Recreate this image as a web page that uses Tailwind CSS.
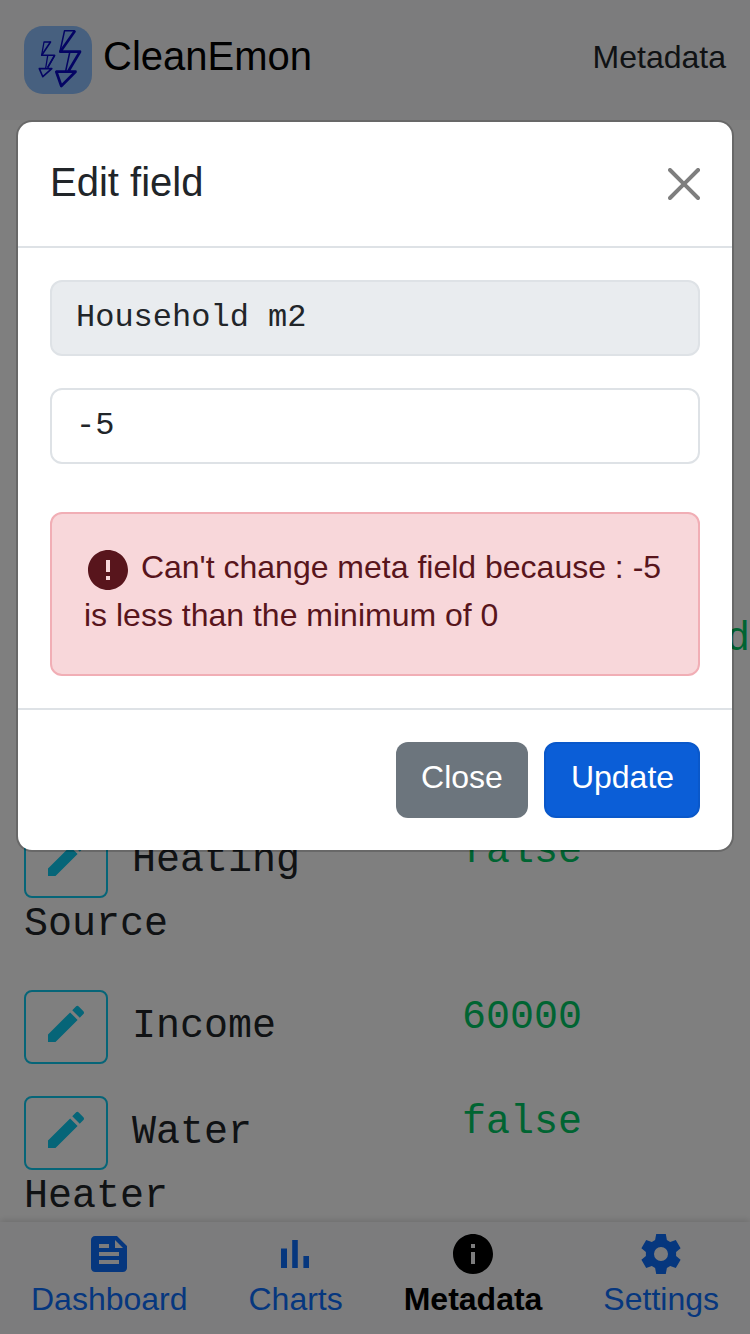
<!DOCTYPE html>
<html lang="en">
<head>
<meta charset="utf-8">
<title>CleanEmon</title>
<script src="https://cdn.jsdelivr.net/npm/@tailwindcss/browser@4"></script>
</head>
<body class="bg-white text-[#212529] font-['Liberation_Sans',sans-serif] h-[1334px] w-[750px] overflow-hidden relative">
<div class="flex h-[1334px] flex-col">
  <header class="flex h-[120px] shrink-0 items-center justify-between bg-[#f8f9fa] px-6">
    <div class="flex items-center gap-[11px]">
      <svg class="size-[68px]" viewBox="0 0 68 68" fill="none" stroke="#0808c8" stroke-linejoin="round" stroke-linecap="round">
        <rect width="68" height="68" rx="19" fill="#8ec0fe" stroke="none"/>
        <path stroke-width="1.300" d="M26 16H20L17.700 29M23.700 29.700L21.700 42M24 41L30.700 29.700"/>
        <path stroke-width="1.600" d="M26.500 16L17.700 29.300H30.500L24 41M15.300 42.600H27.800L18.800 50.700Z"/>
        <path stroke-width="1.500" d="M50 4.800H40.500L36 25.500M45.700 26.500L41.700 45"/>
        <path stroke-width="2.700" d="M50.500 5.500L36.300 25.700H56L44.500 45M32.300 45.700H51.500L37.300 60Z"/>
      </svg>
      <span class="text-[40px] leading-[60px] text-black -mt-[8px]">CleanEmon</span>
    </div>
    <span class="text-[32px] leading-[48px] -mt-[6px]">Metadata</span>
  </header>

  <main class="h-[1102px] shrink-0 overflow-hidden px-6 pt-[490px] font-['Liberation_Mono',monospace] text-[40px] leading-[60px]">
    <div class="h-[212px] pl-[702px] text-[#00c864]">d</div>
    <div class="grid grid-cols-[438px_1fr] pb-8">
      <div class="pt-[2px]">
        <div class="flex h-[72px] items-start gap-6">
          <span class="flex h-[74px] w-[84px] shrink-0 justify-center rounded-lg border-2 border-[#0dcaf0] pt-2 text-[#0dcaf0]"><svg class="size-12" viewBox="0 0 24 24" fill="currentColor"><path d="M3 17.250V21h3.750L17.810 9.940l-3.750-3.750L3 17.250zM20.710 7.040c.39-.39.39-1.020 0-1.410l-2.340-2.340a.9959.9959 0 0 0-1.410 0l-1.830 1.830 3.750 3.750 1.830-1.830z"/></svg></span>
          <span class="pt-[7px]">Heating</span>
        </div>
        <div class="-mt-px mb-px">Source</div>
      </div>
      <div class="text-[#00c864]">false</div>
    </div>
    <div class="grid grid-cols-[438px_1fr] pb-8">
      <div class="pt-[2px]">
        <div class="flex h-[72px] items-start gap-6">
          <span class="flex h-[74px] w-[84px] shrink-0 justify-center rounded-lg border-2 border-[#0dcaf0] pt-2 text-[#0dcaf0]"><svg class="size-12" viewBox="0 0 24 24" fill="currentColor"><path d="M3 17.250V21h3.750L17.810 9.940l-3.750-3.750L3 17.250zM20.710 7.040c.39-.39.39-1.020 0-1.410l-2.340-2.340a.9959.9959 0 0 0-1.410 0l-1.830 1.830 3.750 3.750 1.830-1.830z"/></svg></span>
          <span class="pt-[7px]">Income</span>
        </div>
      </div>
      <div class="text-[#00c864]">60000</div>
    </div>
    <div class="grid grid-cols-[438px_1fr]">
      <div class="pt-[2px]">
        <div class="flex h-[72px] items-start gap-6">
          <span class="flex h-[74px] w-[84px] shrink-0 justify-center rounded-lg border-2 border-[#0dcaf0] pt-2 text-[#0dcaf0]"><svg class="size-12" viewBox="0 0 24 24" fill="currentColor"><path d="M3 17.250V21h3.750L17.810 9.940l-3.750-3.750L3 17.250zM20.710 7.040c.39-.39.39-1.020 0-1.410l-2.340-2.340a.9959.9959 0 0 0-1.410 0l-1.830 1.830 3.750 3.750 1.830-1.830z"/></svg></span>
          <span class="pt-[7px]">Water</span>
        </div>
        <div class="-mt-px">Heater</div>
      </div>
      <div class="-mt-px text-[#00c864]">false</div>
    </div>
  </main>

  <nav class="relative flex h-[112px] shrink-0 justify-between bg-[#f8f9fa] px-[31px] pt-2 text-[32px] leading-[48px] text-[#0d6efd] shadow-[0_-2px_6px_rgba(0,0,0,0.13)]">
    <div class="flex flex-col items-center">
      <svg class="size-12 shrink-0" viewBox="0 0 24 24" fill="currentColor"><path d="M16 3H5c-1.100 0-2 .9-2 2v14c0 1.100.9 2 2 2h14c1.100 0 2-.9 2-2V8l-5-5zM7 7h5v2H7V7zm10 10H7v-2h10v2zm0-4H7v-2h10v2zm-2-4V5l4 4h-4z"/></svg>
      <span class="-mt-[3px]">Dashboard</span>
    </div>
    <div class="flex flex-col items-center">
      <svg class="size-12 shrink-0 -ml-px" viewBox="0 0 24 24" fill="currentColor"><path d="M5 9.200h3V19H5zM10.600 5h2.800v14h-2.800zm5.600 8H19v6h-2.800z"/></svg>
      <span class="-mt-[3px]">Charts</span>
    </div>
    <div class="flex flex-col items-center font-bold text-black">
      <svg class="size-12 shrink-0" viewBox="0 0 24 24" fill="currentColor"><path d="M12 2C6.480 2 2 6.480 2 12s4.480 10 10 10 10-4.480 10-10S17.520 2 12 2zm1 15h-2v-6h2v6zm0-8h-2V7h2v2z"/></svg>
      <span class="-mt-[3px]">Metadata</span>
    </div>
    <div class="flex flex-col items-center">
      <svg class="size-12 shrink-0" viewBox="0 0 24 24" fill="currentColor"><path fill-rule="evenodd" d="M9.600 2h4.800l.55 3.050 1.650.95 2.800-1 2.400 4.150-2.250 1.900v1.900l2.250 1.900L19.400 19l-2.800-1-1.650.95L14.400 22H9.600l-.55-3.050L7.400 18l-2.800 1-2.400-4.150 2.250-1.900v-1.900L2.200 9.150 4.600 5l2.800 1 1.650-.95zM12 8.500a3.500 3.500 0 1 0 0 7 3.500 3.500 0 0 0 0-7z"/></svg>
      <span class="-mt-[3px]">Settings</span>
    </div>
  </nav>
</div>

<div class="absolute inset-0 bg-black/50"></div>

<div class="absolute inset-x-4 top-[120px] rounded-2xl border-2 border-black/17.5 bg-white bg-clip-padding">
  <div class="flex h-[126px] items-center justify-between border-b-2 border-[#dee2e6] px-8">
    <h5 class="-mt-1 text-[40px] leading-[60px]">Edit field</h5>
    <svg class="size-8 opacity-50" viewBox="0 0 16 16" fill="#000"><path d="M.293.293a1 1 0 0 1 1.414 0L8 6.586 14.293.293a1 1 0 1 1 1.414 1.414L9.414 8l6.293 6.293a1 1 0 0 1-1.414 1.414L8 9.414l-6.293 6.293a1 1 0 0 1-1.414-1.414L6.586 8 .293 1.707a1 1 0 0 1 0-1.414z"/></svg>
  </div>
  <div class="p-8">
    <div class="h-[76px] rounded-xl border-2 border-[#dee2e6] bg-[#e9ecef] px-6 pt-3 font-['Liberation_Mono',monospace] text-[32px] leading-[48px]">Household m2</div>
    <div class="mt-8 h-[76px] rounded-xl border-2 border-[#dee2e6] bg-white px-6 pt-3 font-['Liberation_Mono',monospace] text-[32px] leading-[48px]">-5</div>
    <div class="mt-12 h-[164px] rounded-xl border-2 border-[#f1aeb5] bg-[#f8d7da] px-8 pt-[29px] text-[32px] leading-[48px] text-[#58151c]"><svg class="-mt-[1px] inline size-12 translate-y-[4px] align-top" viewBox="0 0 24 24" fill="currentColor"><path d="M12 2C6.480 2 2 6.480 2 12s4.480 10 10 10 10-4.480 10-10S17.520 2 12 2zm1 15h-2v-2h2v2zm0-4h-2V7h2v6z"/></svg> Can't change meta field because : -5 is less than the minimum of 0</div>
  </div>
  <div class="flex justify-end gap-4 border-t-2 border-[#dee2e6] p-8 text-[32px] leading-[48px] text-white">
    <button class="h-[76px] w-[132px] rounded-xl bg-[#6c757d] pb-[6px]">Close</button>
    <button class="h-[76px] w-[156px] rounded-xl border-2 border-[#0a58ca] bg-[#0b5ed7] pb-[6px] pl-px">Update</button>
  </div>
</div>
</body>
</html>
